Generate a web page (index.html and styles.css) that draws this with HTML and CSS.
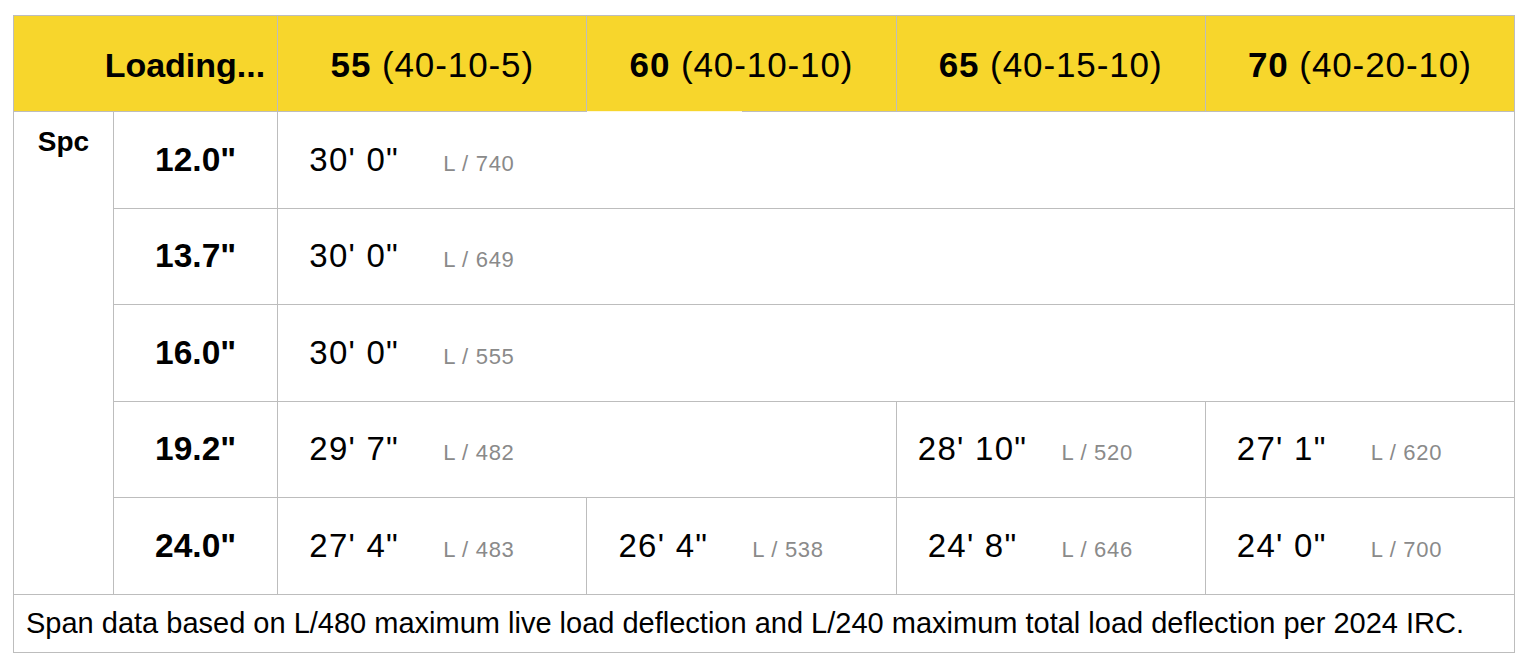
FILE: index.html
```html
<!DOCTYPE html>
<html>
<head>
<meta charset="utf-8">
<link rel="stylesheet" href="styles.css">
</head>
<body>
<table class="span-table">
  <colgroup>
    <col class="c-spc">
    <col class="c-size">
    <col class="c-load">
    <col class="c-load">
    <col class="c-load">
    <col class="c-load">
  </colgroup>
  <thead>
    <tr class="head-row">
      <th class="h-loading" colspan="2">Loading...</th>
      <th class="h-load"><b>55</b> (40-10-5)</th>
      <th class="h-load h-gap"><b>60</b> (40-10-10)</th>
      <th class="h-load"><b>65</b> (40-15-10)</th>
      <th class="h-load"><b>70</b> (40-20-10)</th>
    </tr>
  </thead>
  <tbody>
    <tr class="row">
      <td class="spc" rowspan="5">Spc</td>
      <td class="size">12.0"</td>
      <td class="val" colspan="4"><span class="v">30' 0"</span><span class="l">L / 740</span></td>
    </tr>
    <tr class="row">
      <td class="size">13.7"</td>
      <td class="val" colspan="4"><span class="v">30' 0"</span><span class="l">L / 649</span></td>
    </tr>
    <tr class="row">
      <td class="size">16.0"</td>
      <td class="val" colspan="4"><span class="v">30' 0"</span><span class="l">L / 555</span></td>
    </tr>
    <tr class="row">
      <td class="size">19.2"</td>
      <td class="val" colspan="2"><span class="v">29' 7"</span><span class="l">L / 482</span></td>
      <td class="val"><span class="v">28' 10"</span><span class="l">L / 520</span></td>
      <td class="val"><span class="v">27' 1"</span><span class="l">L / 620</span></td>
    </tr>
    <tr class="row">
      <td class="size">24.0"</td>
      <td class="val"><span class="v">27' 4"</span><span class="l">L / 483</span></td>
      <td class="val"><span class="v">26' 4"</span><span class="l">L / 538</span></td>
      <td class="val"><span class="v">24' 8"</span><span class="l">L / 646</span></td>
      <td class="val"><span class="v">24' 0"</span><span class="l">L / 700</span></td>
    </tr>
    <tr class="foot-row">
      <td class="foot" colspan="6">Span data based on L/480 maximum live load deflection and L/240 maximum total load deflection per 2024 IRC.</td>
    </tr>
  </tbody>
</table>
</body>
</html>
```
FILE: styles.css
```css
html, body {
  margin: 0;
  padding: 0;
  background: #ffffff;
}
body {
  padding: 15px 15px 0 13px;
  font-family: "Liberation Sans", Arial, sans-serif;
  color: #000;
}
.span-table {
  border-collapse: collapse;
  table-layout: fixed;
  width: 1502px;
}
.c-spc { width: 100px; }
.c-size { width: 164px; }
.c-load { width: 309px; }

.span-table th,
.span-table td {
  border: 1px solid #bdbdbd;
  padding: 0;
}
.head-row { height: 96px; }
.head-row th {
  background: #f7d62c;
  font-weight: normal;
  font-size: 35px;
  letter-spacing: 0.9px;
  vertical-align: middle;
  padding-top: 3px;
}
.head-row th.h-loading {
  text-align: right;
  padding-right: 12px;
  font-weight: bold;
  font-size: 34px;
  letter-spacing: 0;
}
.h-load { text-align: center; }
.h-gap { position: relative; }
.h-gap::after {
  content: "";
  position: absolute;
  left: 0;
  bottom: -1px;
  width: 155px;
  height: 1px;
  background: #fdf7dc;
}
.row { height: 96.5px; }
.span-table td.spc {
  vertical-align: top;
  text-align: center;
  font-weight: bold;
  font-size: 28px;
  padding-top: 14px;
}
.size {
  text-align: center;
  font-weight: bold;
  font-size: 33.5px;
}
.span-table td.val {
  padding-left: 9px;
  white-space: nowrap;
}
.v {
  display: inline-block;
  width: 134px;
  text-align: center;
  font-size: 33px;
  letter-spacing: 1.25px;
}
.l {
  margin-left: 22px;
  font-size: 22px;
  letter-spacing: 0.7px;
  color: #8a8a8a;
}
.foot-row { height: 58px; }
.span-table td.foot {
  font-size: 29px;
  padding-left: 12px;
}
```
